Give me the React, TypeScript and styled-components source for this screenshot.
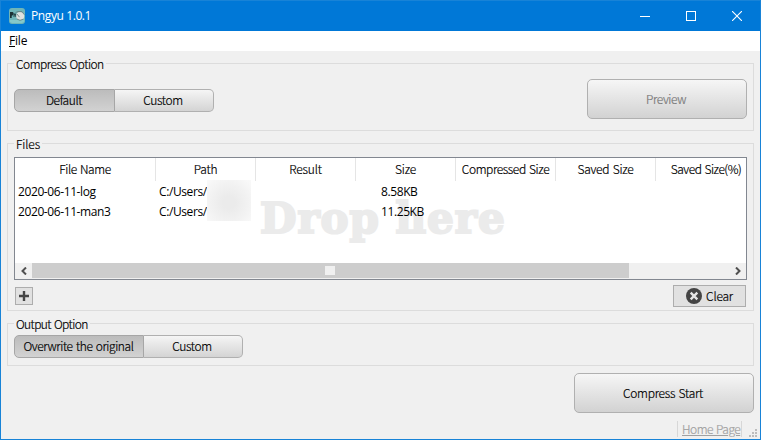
import React from 'react';
import styled, { createGlobalStyle } from 'styled-components';

const GlobalStyle = createGlobalStyle`
  * { box-sizing: border-box; }
  body { margin: 0; overflow: hidden; }
`;

const gothic = `'Noto Sans CJK JP', 'Liberation Sans', sans-serif`;
const segoe = `'Open Sans', 'Noto Sans', sans-serif`;

const Window = styled.div`
  width: 761px;
  height: 440px;
  display: flex;
  flex-direction: column;
  background: #f0f0f0;
  border: 1px solid #1883d7;
  font: 300 12px/16px ${gothic};
  color: #000;
`;

const TitleBar = styled.header`
  height: 30px;
  display: flex;
  align-items: center;
  padding-left: 8px;
  background: #0078d7;
  color: #fff;
`;

const Title = styled.h1`
  flex: 1;
  margin: 0 0 0 6px;
  font: 400 12px/16px ${segoe};
  letter-spacing: -0.4px;
`;

const Caption = styled.button`
  width: 46px;
  height: 30px;
  padding: 0;
  border: 0;
  display: grid;
  place-items: center;
  background: transparent;
  color: #fff;
`;

const MenuBar = styled.nav`
  height: 20px;
  padding: 2px 8px;
  background: #fff;
  font: 400 12px/16px ${segoe};
  letter-spacing: -0.2px;
`;

const Body = styled.main`
  flex: 1;
  padding: 6px 6px 0;
  display: flex;
  flex-direction: column;
`;

const Group = styled.section<{ $h: number; $gap: number }>`
  height: ${(p) => p.$h}px;
  margin-bottom: ${(p) => p.$gap}px;
  display: flex;
  flex-direction: column;
`;

const Legend = styled.div`
  height: 14px;
  display: flex;
  gap: 2px;
  line-height: 13px;
  &::before { content: ''; width: 6px; height: 7px; align-self: flex-end; border: solid #dcdcdc; border-width: 1px 0 0 1px; }
  &::after { content: ''; flex: 1; height: 7px; align-self: flex-end; border: solid #dcdcdc; border-width: 1px 1px 0 0; }
`;

const GroupBody = styled.div`
  flex: 1;
  padding: 0 6px;
  border: solid #dcdcdc;
  border-width: 0 1px 1px;
`;

const Text = styled.span<{ $track?: number }>`
  letter-spacing: ${(p) => p.$track ?? -0.4}px;
  word-spacing: 1px;
  -webkit-text-stroke: 0.2px currentColor;
  white-space: nowrap;
`;

const OptionRow = styled.div`
  display: flex;
  justify-content: space-between;
  padding-top: 8px;
`;

const Segments = styled.div<{ $top?: number }>`
  display: flex;
  height: 23px;
  margin-top: ${(p) => p.$top ?? 0}px;
`;

const Segment = styled.button<{ $w: number; $on?: boolean }>`
  width: ${(p) => p.$w}px;
  height: 23px;
  padding: ${(p) => (p.$on ? '0 1px 1px 0' : '0 2px 2px 0')};
  border: 1px solid ${(p) => (p.$on ? '#a6a6a6' : '#b0b0b0')};
  border-left-width: ${(p) => (p.$on ? 1 : 0)}px;
  border-radius: ${(p) => (p.$on ? '5px 0 0 5px' : '0 5px 5px 0')};
  background: ${(p) => (p.$on ? 'linear-gradient(#bcbcbc, #d2d2d2)' : 'linear-gradient(#f5f5f5, #d4d4d4)')};
  font: inherit;
  line-height: 18px;
  color: #000;
`;

const BigButton = styled.button<{ $w: number }>`
  width: ${(p) => p.$w}px;
  height: 40px;
  padding: 0 2px 1px 0;
  border: 1px solid #b0b0b0;
  border-radius: 5px;
  background: linear-gradient(#f6f6f6, #d2d2d2);
  font: inherit;
  color: #000;
  &:disabled { color: #787878; }
`;

const Table = styled.div`
  position: relative;
  height: 123px;
  margin-top: 6px;
  border: 1px solid #828790;
  background: #fff;
  display: flex;
  flex-direction: column;
  overflow: hidden;
`;

const columns = '141px 100px 100px 100px 100px 100px 100px';

const HeaderRow = styled.div`
  display: grid;
  grid-template-columns: ${columns};
  height: 23px;
`;

const HeaderCell = styled.div`
  border-right: 1px solid #e5e5e5;
  text-align: center;
  line-height: 21px;
  white-space: nowrap;
  &:last-child { border-right: 0; }
`;

const Row = styled.div`
  position: relative;
  z-index: 1;
  display: grid;
  grid-template-columns: ${columns};
  height: 20px;
  font: 400 12px/22px ${segoe};
  letter-spacing: -0.4px;
`;

const Cell = styled.div<{ $pad?: number }>`
  padding-left: ${(p) => p.$pad ?? 3}px;
  white-space: nowrap;
`;

const DropHint = styled.div`
  position: absolute;
  left: 245px;
  top: 34px;
  font: 700 42px/54px 'DejaVu Serif', serif;
  letter-spacing: 1px;
  color: #ebebeb;
  -webkit-text-stroke: 2.2px #ebebeb;
  stroke-linejoin: round;
  white-space: nowrap;
`;

const Redaction = styled.div`
  position: absolute;
  z-index: 2;
  left: 192px;
  top: 22px;
  width: 44px;
  height: 41px;
  background: radial-gradient(ellipse at 50% 55%, #ebebeb 20%, #f2f2f2 60%, #fafafa 100%);
`;

const ScrollBar = styled.div`
  height: 16px;
  margin-top: auto;
  display: grid;
  grid-template-columns: 17px 597px 1fr 17px;
  align-items: center;
  background: #f0f0f0;
  padding-bottom: 1px;
  svg { justify-self: center; }
`;

const Thumb = styled.div`
  height: 15px;
  display: grid;
  place-items: center;
  background: #cdcdcd;
  &::after { content: ''; width: 10px; height: 9px; margin-right: 1px; background: #f0f0f0; }
`;

const Tools = styled.div`
  display: flex;
  justify-content: space-between;
  padding: 5px 1px 0 1px;
`;

const AddButton = styled.button`
  width: 18px;
  height: 18px;
  margin-top: 2px;
  padding: 0;
  border: 1px solid #adadad;
  background: #e1e1e1;
  display: grid;
  place-items: center;
`;

const ClearButton = styled.button`
  width: 73px;
  height: 22px;
  padding: 0;
  border: 1px solid #adadad;
  background: #e1e1e1;
  display: flex;
  align-items: center;
  justify-content: center;
  gap: 4px;
  font: inherit;
  color: #000;
`;

const StartRow = styled.div`
  display: flex;
  justify-content: flex-end;
`;

const StatusBar = styled.footer`
  display: flex;
  justify-content: flex-end;
  height: 18px;
  margin: 8px -4px 0 0;
`;

const HomeLink = styled.a`
  width: 65px;
  height: 16px;
  padding-left: 4px;
  border: solid #d7d7d7;
  border-width: 0 1px;
  color: #a0a0a0;
  line-height: 15px;
  text-decoration: underline;
  white-space: nowrap;
`;

const Grip = styled.svg`
  margin: 8px 1px 0 7px;
`;

const AppIcon = () => (
  <svg width="16" height="16" viewBox="0 0 16 16">
    <rect width="16" height="16" rx="3" fill="#6fb5b8" />
    <path d="M1 12h14v2l-2 1H3l-2-1z" fill="#84c9ca" />
    <path d="M1 4h2.7l1 1-.4 2-1.6.8V10H1z" fill="#1c3236" />
    <path d="M4.5 5.5h2l1 1V9H6.3V7.4H5.5V9h-1z" fill="#29484c" />
    <ellipse cx="11.2" cy="8" rx="4" ry="4.1" fill="#dfe2e0" />
    <path d="M6.5 4.5l2.5-1 4 .2 2.3 3M8 6l2.5 3.2M8 11l3 1.3 3-1" fill="none" stroke="#65797a" strokeWidth=".8" />
  </svg>
);

export default function App() {
  return (
    <>
      <GlobalStyle />
      <Window>
        <TitleBar>
          <AppIcon />
          <Title>Pngyu 1.0.1</Title>
          <Caption aria-label="Minimize">
            <svg width="10" height="10"><path d="M0 5.5h10" stroke="#fff" /></svg>
          </Caption>
          <Caption aria-label="Maximize">
            <svg width="10" height="10"><rect x=".5" y=".5" width="9" height="9" fill="none" stroke="#fff" /></svg>
          </Caption>
          <Caption aria-label="Close">
            <svg width="10" height="10"><path d="M0 0l10 10M10 0L0 10" stroke="#fff" strokeWidth="1.1" /></svg>
          </Caption>
        </TitleBar>
        <MenuBar><u>F</u>ile</MenuBar>
        <Body>
          <Group $h={74} $gap={6}>
            <Legend><Text $track={-0.5}>Compress Option</Text></Legend>
            <GroupBody>
              <OptionRow>
                <Segments $top={10}>
                  <Segment $w={101} $on><Text>Default</Text></Segment>
                  <Segment $w={99}><Text>Custom</Text></Segment>
                </Segments>
                <BigButton $w={160} disabled><Text>Preview</Text></BigButton>
              </OptionRow>
            </GroupBody>
          </Group>
          <Group $h={174} $gap={6}>
            <Legend><Text $track={-0.1}>Files</Text></Legend>
            <GroupBody>
              <Table>
                <HeaderRow>
                  <HeaderCell><Text>File Name</Text></HeaderCell>
                  <HeaderCell><Text $track={-0.2}>Path</Text></HeaderCell>
                  <HeaderCell><Text $track={-0.2}>Result</Text></HeaderCell>
                  <HeaderCell><Text $track={-0.2}>Size</Text></HeaderCell>
                  <HeaderCell><Text>Compressed Size</Text></HeaderCell>
                  <HeaderCell><Text $track={-0.25}>Saved Size</Text></HeaderCell>
                  <HeaderCell><Text $track={-0.5}>Saved Size(%)</Text></HeaderCell>
                </HeaderRow>
                <Row>
                  <Cell>2020-06-11-log</Cell><Cell>C:/Users/</Cell><Cell /><Cell $pad={25}>8.58KB</Cell>
                </Row>
                <Row>
                  <Cell>2020-06-11-man3</Cell><Cell>C:/Users/</Cell><Cell /><Cell $pad={25}>11.25KB</Cell>
                </Row>
                <DropHint>Drop here</DropHint>
                <Redaction />
                <ScrollBar>
                  <svg width="8" height="8"><path d="M6 .5L2.5 4 6 7.5" fill="none" stroke="#505050" strokeWidth="2" /></svg>
                  <Thumb />
                  <span />
                  <svg width="8" height="8"><path d="M2 .5L5.5 4 2 7.5" fill="none" stroke="#505050" strokeWidth="2" /></svg>
                </ScrollBar>
              </Table>
              <Tools>
                <AddButton aria-label="Add">
                  <svg width="10" height="10"><path d="M5 0v10M0 5h10" stroke="#444" strokeWidth="2.4" /></svg>
                </AddButton>
                <ClearButton>
                  <svg width="16" height="16" viewBox="0 0 16 16">
                    <circle cx="8" cy="8" r="8" fill="#444" />
                    <path d="M4.7 4.7l6.6 6.6M11.3 4.7l-6.6 6.6" stroke="#e4e4e4" strokeWidth="2.4" />
                  </svg>
                  <Text $track={-0.2}>Clear</Text>
                </ClearButton>
              </Tools>
            </GroupBody>
          </Group>
          <Group $h={49} $gap={7}>
            <Legend><Text $track={-0.6}>Output Option</Text></Legend>
            <GroupBody>
              <Segments $top={4}>
                <Segment $w={130} $on><Text>Overwrite the original</Text></Segment>
                <Segment $w={99}><Text>Custom</Text></Segment>
              </Segments>
            </GroupBody>
          </Group>
          <StartRow><BigButton $w={180}><Text $track={-0.25}>Compress Start</Text></BigButton></StartRow>
          <StatusBar>
            <HomeLink><Text $track={-0.5}>Home Page</Text></HomeLink>
            <Grip width="8" height="8" fill="#bcbcbc">
              <path d="M6 0h2v2H6zM3 3h2v2H3zM6 3h2v2H6zM0 6h2v2H0zM3 6h2v2H3zM6 6h2v2H6z" />
            </Grip>
          </StatusBar>
        </Body>
      </Window>
    </>
  );
}
